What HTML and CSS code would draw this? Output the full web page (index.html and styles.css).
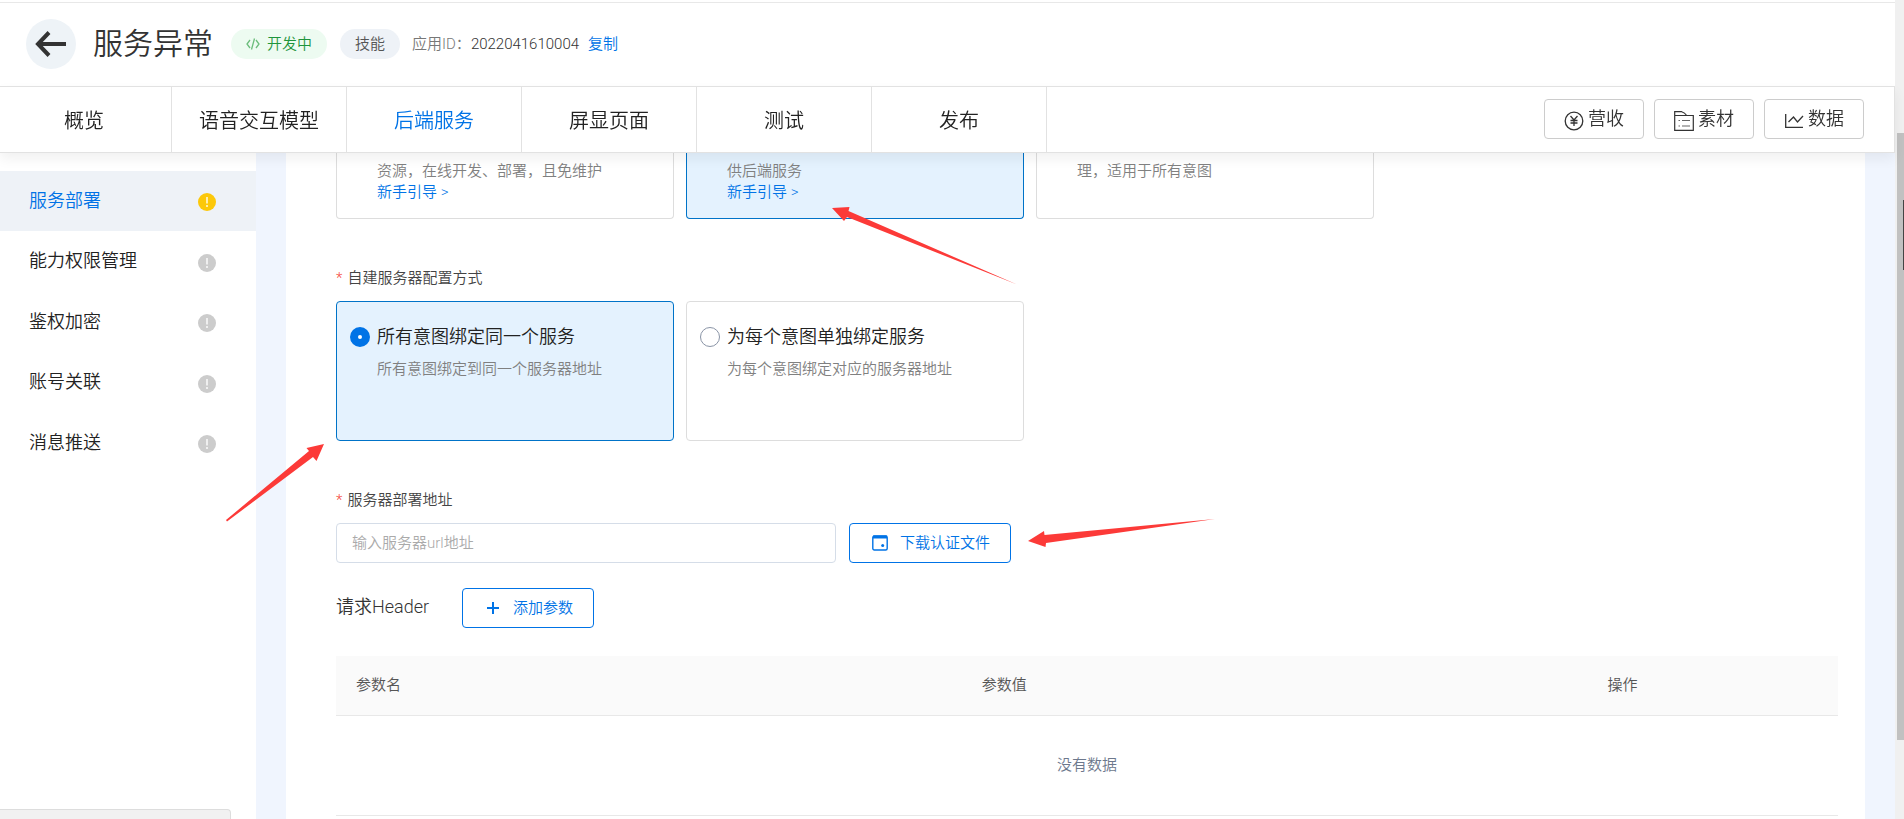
FILE: index.html
```
<!DOCTYPE html>
<html lang="zh-CN">

<head>
    <meta charset="UTF-8">
    <meta name="viewport" content="width=device-width, initial-scale=1.0">
    <title>服务异常</title>
    <link rel="stylesheet" href="styles.css">
</head>

<body>
    <!-- shared shape for the little warning badges in the side menu -->
    <svg class="sprite" width="0" height="0">
        <symbol id="warn" viewBox="0 0 18 18">
            <circle cx="9" cy="9" r="9" fill="currentColor" />
            <path d="M9 4v6.500M9 12v2" stroke="#fff" stroke-opacity=".85" stroke-width="1.600" />
        </symbol>
    </svg>

    <div class="page">
        <header class="app-header">
            <button class="back" type="button" aria-label="返回">
                <svg width="32" height="26" viewBox="0 0 32 26" fill="none" stroke="#333" stroke-width="4">
                    <path d="M31 13H4M14 1.500L3 13l11 11.500" />
                </svg>
            </button>
            <h1>服务异常</h1>
            <span class="tag tag-dev">
                <svg width="14" height="12" viewBox="0 0 14 12" fill="none" stroke="#6cbd7c" stroke-width="1.300">
                    <path d="M4 2L1 6l3 4M10 2l3 4-3 4M8.500 .500l-3 11" />
                </svg>
                开发中
            </span>
            <span class="tag">技能</span>
            <span class="app-id">应用ID：</span>
            <span class="app-number">2022041610004</span>
            <a class="copy" href="#">复制</a>
        </header>

        <div class="nav-bar">
            <nav class="tabs">
                <a href="#">概览</a>
                <a href="#">语音交互模型</a>
                <a href="#" class="active">后端服务</a>
                <a href="#">屏显页面</a>
                <a href="#">测试</a>
                <a href="#">发布</a>
            </nav>
            <div class="tools">
                <button type="button">
                    <svg width="20" height="20" viewBox="0 0 20 20" fill="none" stroke="#333" stroke-width="1.300">
                        <circle cx="10" cy="10" r="8.800" />
                        <path d="M6.500 5l3.500 4 3.500-4M6.500 9.500h7M6.500 12h7M10 9v6" />
                    </svg>
                    营收
                </button>
                <button type="button">
                    <svg width="20" height="20" viewBox="0 0 20 20" fill="none" stroke="#333" stroke-width="1.200">
                        <path d="M.700 4.500h18.600v14.800H.700zM.700 4.500V.700h7q3 1 5 3.800" />
                        <path d="M4.500 9.500h1.500M4.500 15h1.500M8 9.500h8M8 15h8" stroke="#666" />
                    </svg>
                    素材
                </button>
                <button type="button">
                    <svg width="20" height="20" viewBox="0 0 20 20" fill="none" stroke="#333" stroke-width="1.300">
                        <path d="M1.700 3v13.300H19M4.500 11l5-5 4 5 5.500-6" />
                    </svg>
                    数据
                </button>
            </div>
        </div>

        <div class="body">
            <aside class="side">
                <ul>
                    <li class="active"><a href="#">服务部署<svg width="18" height="18"><use href="#warn" /></svg></a></li>
                    <li><a href="#">能力权限管理<svg width="18" height="18"><use href="#warn" /></svg></a></li>
                    <li><a href="#">鉴权加密<svg width="18" height="18"><use href="#warn" /></svg></a></li>
                    <li><a href="#">账号关联<svg width="18" height="18"><use href="#warn" /></svg></a></li>
                    <li><a href="#">消息推送<svg width="18" height="18"><use href="#warn" /></svg></a></li>
                </ul>
            </aside>

            <main class="content">
                <!-- lower part of the deploy type cards, the rest is scrolled under the tabs -->
                <div class="cards">
                    <div class="card scrolled">
                        <p>资源，在线开发、部署，且免维护</p>
                        <a href="#">新手引导 &gt;</a>
                    </div>
                    <div class="card scrolled selected">
                        <p>供后端服务</p>
                        <a href="#">新手引导 &gt;</a>
                    </div>
                    <div class="card scrolled">
                        <p>理，适用于所有意图</p>
                    </div>
                </div>

                <p class="label"><span>*</span>自建服务器配置方式</p>
                <div class="cards">
                    <label class="card selected">
                        <input type="radio" name="mode" checked>
                        <span class="card-title">所有意图绑定同一个服务</span>
                        <span class="card-text">所有意图绑定到同一个服务器地址</span>
                    </label>
                    <label class="card">
                        <input type="radio" name="mode">
                        <span class="card-title">为每个意图单独绑定服务</span>
                        <span class="card-text">为每个意图绑定对应的服务器地址</span>
                    </label>
                </div>

                <label class="label" for="url"><span>*</span>服务器部署地址</label>
                <div class="url-row">
                    <input id="url" type="text" placeholder="输入服务器url地址">
                    <button class="btn" type="button">
                        <svg width="16" height="16" viewBox="0 0 16 16" fill="none" stroke="#0073e6">
                            <rect x=".800" y="1" width="14.400" height="14" rx="1.500" stroke-width="1.400" />
                            <path d="M1 2h14" stroke-width="3" />
                            <circle cx="10.700" cy="10.500" r="1.500" fill="#0073e6" stroke="none" />
                        </svg>
                        下载认证文件
                    </button>
                </div>

                <div class="header-row">
                    <span>请求Header</span>
                    <button class="btn" type="button">
                        <svg width="16" height="16" viewBox="0 0 16 16" stroke="#0073e6" stroke-width="2">
                            <path d="M2 8h12M8 2v12" />
                        </svg>
                        添加参数
                    </button>
                </div>

                <table>
                    <thead>
                        <tr>
                            <th class="col-wide">参数名</th>
                            <th class="col-wide">参数值</th>
                            <th>操作</th>
                        </tr>
                    </thead>
                    <tbody>
                        <tr>
                            <td colspan="3">没有数据</td>
                        </tr>
                    </tbody>
                </table>
            </main>
        </div>
    </div>

    <div class="scrollbar">
        <div class="thumb"></div>
        <div class="edge"></div>
    </div>

    <div class="status"></div>

    <!-- red arrows drawn on top of the page -->
    <svg class="arrows" width="1904" height="819" fill="#fc3a38">
        <polygon points="832,208 849.500,207 848.500,211 1017,284.500 847,217 844,221" />
        <polygon points="324,444 306.500,448 309,451 226,520 227,521.500 313,457 316.500,461" />
        <polygon points="1028,541 1044,531 1044.500,535 1215,519 1046,543 1045.500,547" />
    </svg>
</body>

</html>
```
FILE: styles.css
```
* {
    box-sizing: border-box;
}

body, html {
    height: 100%;
    margin: 0;
    overflow: hidden;
}

body {
    display: flex;
    font-family: Roboto, "Noto Sans CJK SC", sans-serif;
    font-size: 15px;
    font-weight: 350;
    line-height: 21px;
    color: #333;
    background: #fff;
}

a {
    color: #0073e6;
    text-decoration: none;
}

p, h1, ul {
    margin: 0;
    padding: 0;
}

button, input {
    font: inherit;
    color: inherit;
}

.sprite {
    position: absolute;
}

.page {
    flex: 1;
    display: flex;
    flex-direction: column;
    min-width: 0;
}

/* title row */
.app-header {
    flex: none;
    display: flex;
    align-items: center;
    height: 84px;
    margin-top: 2px;
    padding: 0 26px 1px;
    border-top: 1px solid #e8e8e8;
}

.back {
    display: flex;
    align-items: center;
    justify-content: center;
    width: 50px;
    height: 50px;
    padding: 0;
    border: 0;
    border-radius: 50%;
    background: #eef3f7;
}

h1 {
    margin: 0 18px 0 17px;
    font-size: 30px;
    font-weight: 350;
    line-height: 40px;
}

.tag {
    display: flex;
    align-items: center;
    gap: 7px;
    height: 30px;
    margin-right: 12px;
    padding: 0 15px;
    border-radius: 15px;
    color: #555;
    background: #eef2f7;
}

.tag-dev {
    margin-right: 13px;
    color: #1e953c;
    background: #edfbf1;
}

.app-id {
    color: #777;
}

.copy {
    margin-left: 9px;
}

/* tabs and the tool buttons */
.nav-bar {
    position: relative;
    z-index: 1;
    flex: none;
    display: flex;
    justify-content: space-between;
    height: 67px;
    border: 1px solid #e2e2e2;
    border-left: 0;
    background: #fff;
    box-shadow: 0 6px 12px rgba(0, 0, 0, .06);
}

.tabs {
    display: flex;
}

.tabs a {
    display: flex;
    align-items: center;
    justify-content: center;
    width: 175px;
    padding-top: 3px;
    border-right: 1px solid #e2e2e2;
    font-size: 20px;
    color: #222;
}

.tabs a:first-child {
    width: 172px;
    padding-right: 3px;
}

.tabs a.active {
    color: #0073e6;
}

.tools {
    display: flex;
    gap: 10px;
    padding: 12px 30px 0 0;
}

.tools button {
    display: flex;
    align-items: center;
    justify-content: center;
    gap: 4px;
    width: 100px;
    height: 40px;
    padding: 0 0 2px;
    border: 1px solid #ccc;
    border-radius: 4px;
    font-size: 18px;
    background: #fff;
}

.tools svg {
    margin-top: 6px;
}

/* side menu */
.body {
    flex: 1;
    display: flex;
    min-height: 0;
    background: #f0f5fe;
}

.side {
    flex: none;
    width: 256px;
    padding-top: 18px;
    background: #fff;
}

.side ul {
    display: flex;
    flex-direction: column;
    justify-content: space-between;
    height: 302px;
    list-style: none;
}

.side a {
    display: flex;
    align-items: center;
    justify-content: space-between;
    height: 60px;
    padding: 0 40px 2px 29px;
    font-size: 18px;
    color: #222;
}

.side svg {
    margin-top: 4px;
    color: #ccc;
}

.side .active a {
    color: #0073e6;
    background: #eef2f7;
}

.side .active svg {
    color: #fcc80a;
}

/* settings form */
.content {
    flex: 1;
    min-width: 0;
    margin: 0 30px;
    padding: 0 27px 0 50px;
    overflow: hidden;
    background: #fff;
}

.cards {
    display: flex;
    gap: 12px;
}

.card {
    display: grid;
    grid-template-columns: 27px 1fr;
    align-content: start;
    row-gap: 10px;
    width: 338px;
    height: 140px;
    padding: 23px 13px;
    border: 1px solid #ddd;
    border-radius: 4px;
    color: #808080;
}

.card.scrolled {
    display: block;
    height: 66px;
    padding: 8px 13px 0 40px;
    border-top: 0;
    border-radius: 0 0 4px 4px;
}

.card.selected {
    border-color: #0073c8;
    background: #e4f2fe;
}

.card input {
    appearance: none;
    align-self: center;
    width: 20px;
    height: 20px;
    margin: 0;
    border: 1px solid #8a94a6;
    border-radius: 50%;
    background: #fff;
}

.card input:checked {
    border: 8px solid #0073e6;
}

.card-title {
    font-size: 18px;
    line-height: 24px;
    color: #222;
}

.card-text {
    grid-column: 2;
}

.label {
    display: block;
    margin: 49px 0 12px;
    color: #444;
}

.label span {
    margin-right: 5px;
    color: #f5483b;
}

.url-row {
    display: flex;
    gap: 13px;
}

.url-row input {
    width: 500px;
    height: 40px;
    padding: 0 15px;
    border: 1px solid #d5dde8;
    border-radius: 4px;
}

.url-row input::placeholder {
    color: #aaa;
}

.btn {
    display: flex;
    align-items: center;
    gap: 12px;
    height: 40px;
    padding: 0 20px 0 22px;
    border: 1px solid #0073e6;
    border-radius: 4px;
    color: #0073e6;
    background: #fff;
}

.header-row {
    display: flex;
    align-items: center;
    gap: 33px;
    margin: 25px 0 28px;
    font-size: 18px;
}

.header-row span {
    padding-bottom: 3px;
}

.header-row .btn {
    font-size: 15px;
}

table {
    width: 100%;
    border-collapse: collapse;
    table-layout: fixed;
}

th {
    height: 59px;
    padding: 0 20px;
    border-bottom: 1px solid #e8e8e8;
    font-weight: 350;
    text-align: left;
    color: #555;
    background: #fafafa;
}

.col-wide {
    width: 41.66%;
}

td {
    height: 100px;
    padding: 0;
    border-bottom: 1px solid #e8e8e8;
    text-align: center;
    color: #6d788c;
}

/* window scrollbar */
.scrollbar {
    position: relative;
    flex: none;
    width: 9px;
    padding: 133px 0 0 2px;
    background: #f0f0f0;
}

.thumb {
    height: 607px;
    background: #c1c1c1;
}

.edge {
    position: absolute;
    top: 200px;
    right: 0;
    width: 1px;
    height: 70px;
    background: #444;
}

/* link bubble of the browser, mostly below the window */
.status {
    position: fixed;
    left: 0;
    bottom: 0;
    width: 231px;
    height: 10px;
    border: 1px solid #ddd;
    border-width: 1px 1px 0 0;
    border-radius: 0 4px 0 0;
    background: #f1f1f1;
}

.arrows {
    position: absolute;
    top: 0;
    left: 0;
    pointer-events: none;
}
```
